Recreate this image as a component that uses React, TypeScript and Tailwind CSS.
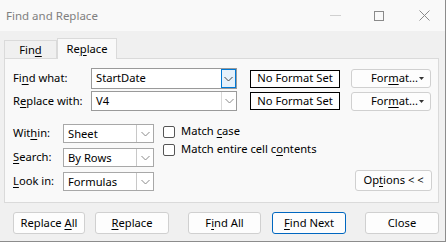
import React from "react";

const U = ({ children }: { children: React.ReactNode }) => <span className="underline underline-offset-2">{children}</span>;

const Chevron = ({ color = "#6b6b6b" }: { color?: string }) => (
  <svg width="9" height="6" viewBox="0 0 9 6"><polyline points="0.5,1 4.5,5 8.5,1" fill="none" stroke={color} strokeWidth="1" /></svg>
);

const Select = ({ value }: { value: string }) => (
  <div className="w-[91px] h-[19px] border border-[#a8a8a8] bg-white flex items-center">
    <div className="flex-1 pl-[4px] leading-none">{value}</div>
    <div className="w-[17px] h-full border-l border-[#c8c8c8] flex items-center justify-center"><Chevron color="#8a8a8a" /></div>
  </div>
);

const Btn = ({ children, w, focus }: { children: React.ReactNode; w: string; focus?: boolean }) => (
  <div className={`${w} h-[22px] rounded-[3px] bg-[#fdfdfd] flex items-center justify-center ${focus ? "border border-[#0067c0]" : "border border-[#d0d0d0]"}`}><span>{children}</span></div>
);

const FormatBtn = () => (
  <div className="ml-[11px] w-[80px] h-[19px] border border-[#d0d0d0] rounded-[3px] bg-[#fdfdfd] flex items-center pl-[19px]">
    <span>For<U>m</U>at...</span>
    <svg width="5" height="3" viewBox="0 0 5 3" className="ml-auto mr-[6px]"><polygon points="0,0 5,0 2.5,3" fill="#333" /></svg>
  </div>
);

export default function App() {
  return (
    <div className="w-[448px] h-[246px] bg-white text-[11.2px] text-black" style={{ fontFamily: '"Noto Sans", "Open Sans", sans-serif' }}>
      <div className="w-[446px] h-[242px] bg-[#f0f0f0] border-r border-b border-[#8c8c8c] flex flex-col">
        <div className="h-[31px] bg-[#f9f9f9] flex items-center pl-[6px]">
          <span className="text-[#7f7f7f] text-[11.5px]">Find and Replace</span>
          <div className="ml-auto flex items-center">
            <div className="w-[11px] h-px bg-[#d0d0d0] mr-[33px]" />
            <div className="w-[10px] h-[10px] border border-[#8a8a8a] mr-[35px]" />
            <svg width="11" height="11" viewBox="0 0 11 11" className="mr-[15px]"><path d="M0.5 0.5 L10.5 10.5 M10.5 0.5 L0.5 10.5" stroke="#8a8a8a" strokeWidth="1" /></svg>
          </div>
        </div>
        <div className="pl-[4px] pr-[6px] flex flex-col">
          <div className="flex items-end h-[27px]">
            <div className="w-[53px] h-[18px] border border-b-0 border-[#dadada] flex items-center justify-center pt-[2px]"><span>Fin<U>d</U></span></div>
            <div className="w-[60px] h-[21px] -mb-px bg-[#f9f9f9] border border-b-0 border-[#dadada] flex items-center justify-center relative z-10"><span>Re<U>p</U>lace</span></div>
          </div>
          <div className="h-[145px] bg-[#f9f9f9] border border-[#dadada] pl-[8px] pr-[6px] pt-[9px] flex flex-col">
            <div className="flex items-center h-[21px]">
              <div className="w-[78px]">Fi<U>n</U>d what:</div>
              <div className="w-[146px] h-[21px] border border-[#9a9a9a] bg-white flex items-center">
                <div className="flex-1 pl-[4px]">StartDate</div>
                <div className="w-[15px] h-[19px] border border-[#0078d4] bg-[#e5f1fb] flex items-center justify-center"><Chevron color="#444" /></div>
              </div>
              <div className="ml-[13px] w-[90px] h-[18px] border border-black bg-white flex items-center justify-center">No Format Set</div>
              <FormatBtn />
            </div>
            <div className="flex items-center h-[20px] mt-[2px]">
              <div className="w-[78px]">R<U>e</U>place with:</div>
              <div className="w-[146px] h-[20px] border border-[#9a9a9a] bg-white flex items-center">
                <div className="flex-1 pl-[4px]">V4</div>
                <div className="w-[15px] h-[18px] border-l border-[#d8d8d8] flex items-center justify-center"><Chevron color="#8a8a8a" /></div>
              </div>
              <div className="ml-[13px] w-[90px] h-[18px] border border-black bg-white flex items-center justify-center">No Format Set</div>
              <FormatBtn />
            </div>
            <div className="flex mt-[13px]">
              <div className="flex flex-col gap-[5px]">
                <div className="flex items-center"><div className="w-[50px]">Wit<U>h</U>in:</div><Select value="Sheet" /></div>
                <div className="flex items-center"><div className="w-[50px]"><U>S</U>earch:</div><Select value="By Rows" /></div>
                <div className="flex items-center"><div className="w-[50px]"><U>L</U>ook in:</div><Select value="Formulas" /></div>
              </div>
              <div className="ml-[9px] flex flex-col gap-[5px] pt-[1px]">
                <div className="flex items-center h-[13px]"><div className="w-[12px] h-[12px] border border-[#555] rounded-[2px] bg-white mr-[6px]" /><span>Match <U>c</U>ase</span></div>
                <div className="flex items-center h-[13px]"><div className="w-[12px] h-[12px] border border-[#555] rounded-[2px] bg-white mr-[6px]" /><span>Match entire cell c<U>o</U>ntents</span></div>
              </div>
              <div className="ml-auto self-end w-[77px] h-[21px] rounded-[3px] border border-[#d0d0d0] bg-[#fdfdfd] flex items-center justify-center"><span>Op<U>t</U>ions &lt; &lt;</span></div>
            </div>
          </div>
          <div className="flex items-center mt-[9px] pl-[9px]">
            <Btn w="w-[74px]">Replace <U>A</U>ll</Btn>
            <div className="ml-[10px]"><Btn w="w-[74px]"><U>R</U>eplace</Btn></div>
            <div className="ml-[19px]"><Btn w="w-[73px]">F<U>i</U>nd All</Btn></div>
            <div className="ml-[11px]"><Btn w="w-[74px]" focus><U>F</U>ind Next</Btn></div>
            <div className="ml-[19px]"><Btn w="w-[74px]">Close</Btn></div>
          </div>
        </div>
      </div>
    </div>
  );
}
